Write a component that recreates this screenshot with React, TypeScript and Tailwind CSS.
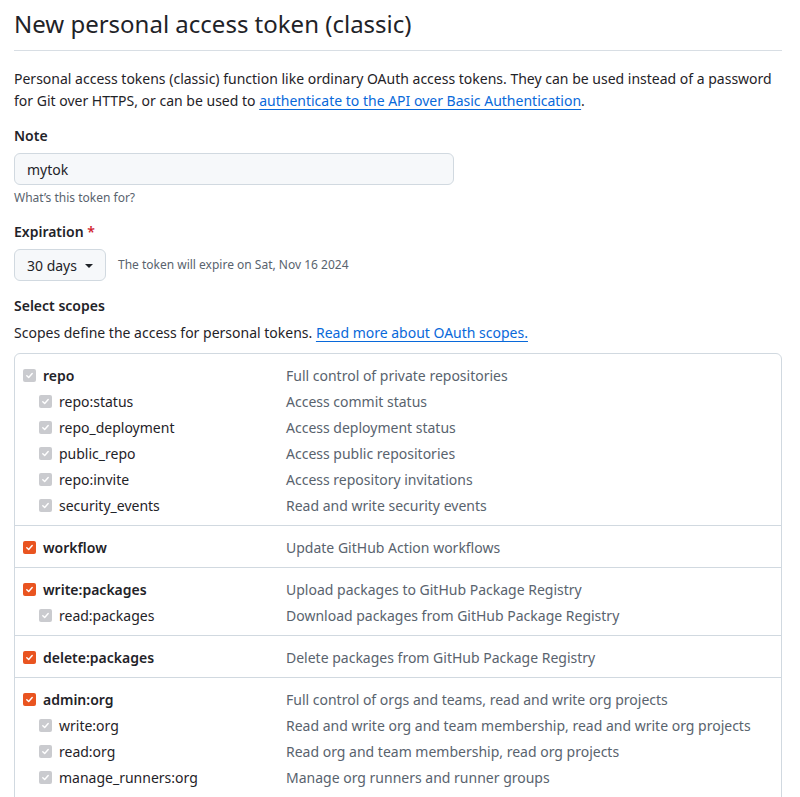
type Scope = {
  name: string;
  description: string;
  checked: boolean;
  children?: { name: string; description: string }[];
};

const scopes: Scope[] = [
  {
    name: "repo",
    description: "Full control of private repositories",
    checked: false,
    children: [
      { name: "repo:status", description: "Access commit status" },
      { name: "repo_deployment", description: "Access deployment status" },
      { name: "public_repo", description: "Access public repositories" },
      { name: "repo:invite", description: "Access repository invitations" },
      { name: "security_events", description: "Read and write security events" },
    ],
  },
  {
    name: "workflow",
    description: "Update GitHub Action workflows",
    checked: true,
  },
  {
    name: "write:packages",
    description: "Upload packages to GitHub Package Registry",
    checked: true,
    children: [
      { name: "read:packages", description: "Download packages from GitHub Package Registry" },
    ],
  },
  {
    name: "delete:packages",
    description: "Delete packages from GitHub Package Registry",
    checked: true,
  },
  {
    name: "admin:org",
    description: "Full control of orgs and teams, read and write org projects",
    checked: true,
    children: [
      { name: "write:org", description: "Read and write org and team membership, read and write org projects" },
      { name: "read:org", description: "Read org and team membership, read org projects" },
      { name: "manage_runners:org", description: "Manage org runners and runner groups" },
    ],
  },
  {
    name: "admin:public_key",
    description: "Full control of user public keys",
    checked: false,
    children: [
      { name: "write:public_key", description: "Write user public keys" },
      { name: "read:public_key", description: "Read user public keys" },
    ],
  },
];

function Checkbox({ checked }: { checked: boolean }) {
  return (
    <span
      className={
        checked
          ? "flex h-[13px] w-[13px] shrink-0 items-center justify-center rounded-[2px] bg-[#e95420]"
          : "flex h-[13px] w-[13px] shrink-0 items-center justify-center rounded-[2px] bg-[#cacbcf]"
      }
    >
      <svg width="9" height="9" viewBox="0 0 10 10" fill="none">
        <path
          d="M2 5.2 L4.1 7.2 L8 2.8"
          stroke="white"
          strokeWidth="1.6"
          strokeLinecap="round"
          strokeLinejoin="round"
        />
      </svg>
    </span>
  );
}

function ScopeRow({
  name,
  description,
  checked,
  child,
}: {
  name: string;
  description: string;
  checked: boolean;
  child?: boolean;
}) {
  return (
    <div className="flex h-[26px] items-center">
      <div
        className={
          child
            ? "flex w-[263px] shrink-0 items-center gap-[7px] pl-4"
            : "flex w-[263px] shrink-0 items-center gap-[7px]"
        }
      >
        <Checkbox checked={checked} />
        <span className={child ? "text-[#1f2328]" : "font-semibold text-[#1f2328]"}>
          {name}
        </span>
      </div>
      <span className="text-[#59636e]">{description}</span>
    </div>
  );
}

export default function App() {
  return (
    <div
      className="min-h-screen bg-white px-[14px] pt-[6px] text-[14px] text-[#1f2328]"
      style={{ fontFamily: '"Noto Sans", "Liberation Sans", sans-serif' }}
    >
      <div className="mr-[4px]">
        <div className="border-b border-[#d8dee4] pb-2">
          <h2 className="text-[24px] leading-[36px] font-normal">
            New personal access token (classic)
          </h2>
        </div>

        <p className="mt-[17px] leading-[22px]">
          Personal access tokens (classic) function like ordinary OAuth access tokens. They can be
          used instead of a password for Git over HTTPS, or can be used to{" "}
          <a href="#" className="text-[#0969da] underline underline-offset-[3px]">
            authenticate to the API over Basic Authentication
          </a>
          .
        </p>

        <div className="mt-[13px]">
          <label className="block leading-[21px] font-semibold">Note</label>
          <div className="mt-[7px] flex h-[32px] w-[440px] items-center rounded-[6px] border border-[#d1d9e0] bg-[#f6f8fa] px-3">
            mytok
          </div>
          <p className="mt-1 text-[12px] leading-[18px] text-[#59636e]">
            What’s this token for?
          </p>
        </div>

        <div className="mt-[14px]">
          <label className="block leading-[21px] font-semibold">
            Expiration <span className="text-[#d1242f]">*</span>
          </label>
          <div className="mt-[7px] flex items-center gap-3">
            <button
              type="button"
              className="flex h-[32px] items-center gap-[8px] rounded-[6px] border border-[#d1d9e0] bg-[#f6f8fa] px-[12px] text-[14px] text-[#1f2328]"
            >
              30 days
              <span className="mt-[2px] h-0 w-0 border-x-[4px] border-t-[4px] border-x-transparent border-t-[#1f2328]" />
            </button>
            <span className="text-[12px] text-[#59636e]">
              The token will expire on Sat, Nov 16 2024
            </span>
          </div>
        </div>

        <div className="mt-[14px]">
          <label className="block leading-[21px] font-semibold">Select scopes</label>
          <p className="mt-[6px] leading-[21px]">
            Scopes define the access for personal tokens.{" "}
            <a href="#" className="text-[#0969da] underline underline-offset-[3px]">
              Read more about OAuth scopes.
            </a>
          </p>

          <div className="mt-[10px] rounded-[6px] border border-[#d1d9e0]">
            {scopes.map((scope, i) => (
              <div
                key={scope.name}
                className={
                  i === 0
                    ? "px-2 pt-2 pb-[7px]"
                    : "border-t border-[#d1d9e0] px-2 pt-2 pb-[7px]"
                }
              >
                <ScopeRow
                  name={scope.name}
                  description={scope.description}
                  checked={scope.checked}
                />
                {scope.children?.map((c) => (
                  <ScopeRow
                    key={c.name}
                    name={c.name}
                    description={c.description}
                    checked={false}
                    child
                  />
                ))}
              </div>
            ))}
          </div>
        </div>
      </div>
    </div>
  );
}
